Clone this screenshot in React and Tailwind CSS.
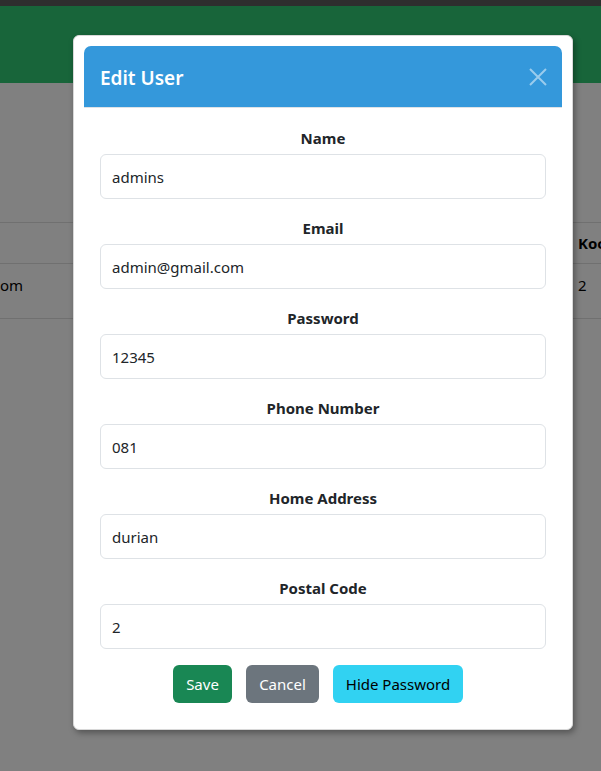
import { useState } from "react";

const fields = [
  { label: "Name", value: "admins" },
  { label: "Email", value: "admin@gmail.com" },
  { label: "Password", value: "12345" },
  { label: "Phone Number", value: "081" },
  { label: "Home Address", value: "durian" },
  { label: "Postal Code", value: "2" },
];

const EditUserModal = () => {
  const [form, setForm] = useState(fields);

  const handleChange = (idx, val) => {
    setForm((prev) => prev.map((f, i) => (i === idx ? { ...f, value: val } : f)));
  };

  return (
    <div className="absolute left-[73px] top-[35px] w-[500px] bg-white rounded-[6px] border border-[#d8d8d8] shadow-[2px_3px_6px_rgba(0,0,0,0.35)] p-[10px] pb-[26px]">
      <div className="bg-[#3498db] rounded-t-[7px] h-[62px] flex items-center justify-between pl-[16px] pr-[14px] border-b border-[#dee2e6]">
        <h5 className="text-white text-[19px] font-semibold leading-none pt-[3px]">Edit User</h5>
        <button className="text-white/50 w-[20px] h-[20px] flex items-center justify-center">
          <svg width="18" height="18" viewBox="0 0 18 18" fill="none" stroke="currentColor" strokeWidth="2">
            <path d="M1 1 L17 17 M17 1 L1 17" />
          </svg>
        </button>
      </div>

      <div className="px-[16px] pt-[19px]">
        <div className="flex flex-col gap-[18px] mb-[16px]">
          {form.map((f, idx) => (
            <div key={f.label}>
              <label className="block text-center font-bold text-[15px] text-[#212529] leading-[22px] mb-[5px]">
                {f.label}
              </label>
              <input
                value={f.value}
                onChange={(e) => handleChange(idx, e.target.value)}
                className="w-full h-[45px] border border-[#dee2e6] rounded-[6px] px-[11px] text-[15px] text-[#212529] outline-none"
              />
            </div>
          ))}
        </div>
        <div className="flex justify-center gap-[14px] text-[15px] pr-[10px]">
          <button className="bg-[#198754] text-white rounded-[6px] h-[38px] w-[59px]">Save</button>
          <button className="bg-[#6c757d] text-white rounded-[6px] h-[38px] w-[73px]">Cancel</button>
          <button className="bg-[#31d2f2] text-black rounded-[6px] h-[38px] w-[130px]">Hide Password</button>
        </div>
      </div>
    </div>
  );
};

export default function App() {
  return (
    <div className="relative w-[601px] h-[771px] overflow-hidden bg-[#808080] font-['Noto_Sans',sans-serif] text-[#212529]">
      <div className="h-[6px] bg-[#2e2e2e]" />
      <div className="h-[77px] bg-[#18653a]" />
      <div className="mt-[139px] border-t border-[#707070]">
        <div className="h-[41px] flex items-center justify-end border-b border-[#707070]">
          <span className="font-bold text-[15px] text-black w-[23px] overflow-hidden whitespace-nowrap">Koc</span>
        </div>
        <div className="h-[55px] flex items-start justify-between pt-[10px] border-b border-[#707070]">
          <span className="text-[15px] text-black">om</span>
          <span className="text-[15px] text-black w-[23px]">2</span>
        </div>
      </div>
      <EditUserModal />
    </div>
  );
}
